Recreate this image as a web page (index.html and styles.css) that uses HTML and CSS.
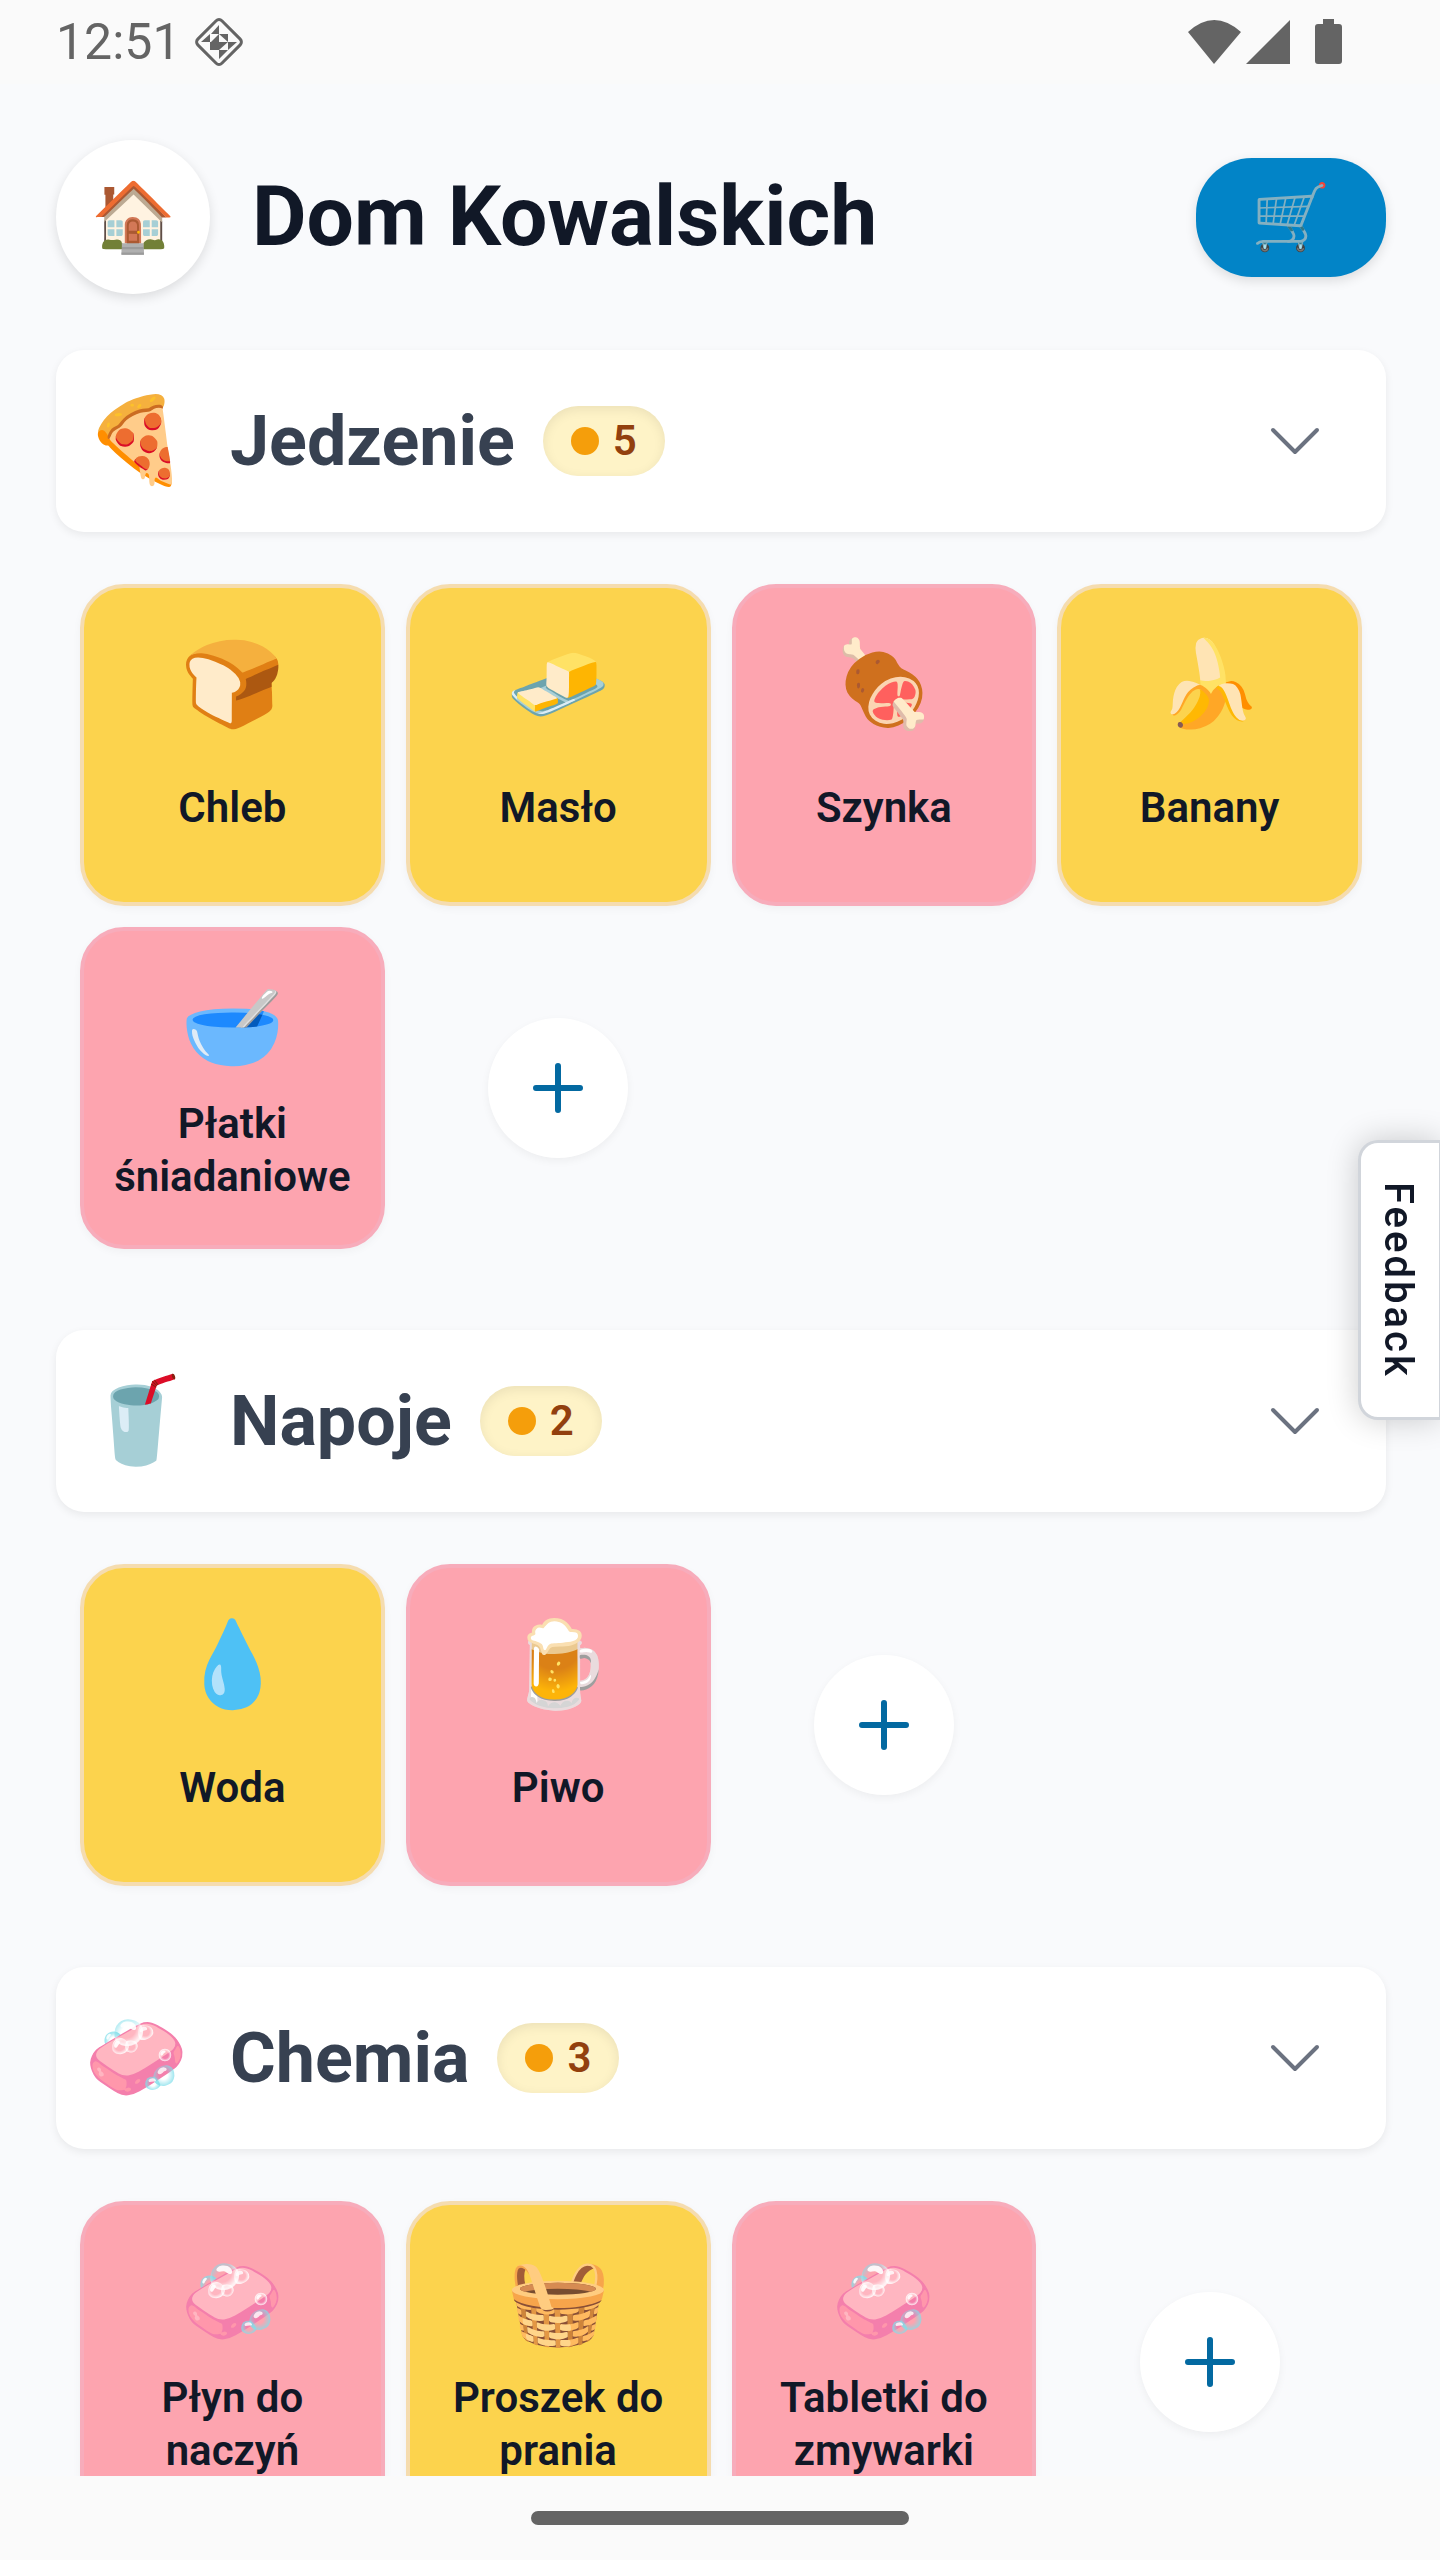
FILE: index.html
```
<!DOCTYPE html>
<html lang="pl">
<head>
    <meta charset="UTF-8">
    <meta name="viewport" content="width=device-width, initial-scale=1.0">
    <title>Dom Kowalskich</title>
    <link rel="stylesheet" href="styles.css">
</head>
<body>
    <div class="status-bar">
        <span class="clock">12:51</span>
        <svg class="status-app" viewBox="0 0 50 50" aria-hidden="true">
            <rect x="8" y="8" width="34" height="34" rx="4" transform="rotate(45 25 25)" fill="none" stroke="#646464" stroke-width="3"/>
            <path fill="#646464" d="M25 8v9h-8zM16 17v8H7zM25 17v8h-8zM25 17h9v8zM16 25h9v8zM25 25h9l-9 8zM34 25h9l-9 8zM16 25l9 8h-9zM25 33h9l-9 9z"/>
        </svg>
        <span class="status-spacer"></span>
        <svg class="status-icons" viewBox="0 0 156 48" aria-hidden="true">
            <path fill="#646464" d="M0 14Q26-10 53 14L26 46ZM58 46L102 2V46ZM135 1h11v5h5q3 0 3 3v34q0 3-3 3h-21q-3 0-3-3V9q0-3 3-3h5z"/>
        </svg>
    </div>

    <main>
        <header>
            <button class="home-btn" aria-label="Dom">🏠</button>
            <h1>Dom Kowalskich</h1>
            <button class="cart-btn" aria-label="Koszyk">🛒</button>
        </header>

        <section>
            <button class="category">
                <span class="emoji">🍕</span>
                <span class="category-name">Jedzenie</span>
                <span class="badge">5</span>
                <svg class="chevron" viewBox="0 0 52 30"><path d="M4 4l22 22L48 4"/></svg>
            </button>
            <div class="products">
                <button class="product low"><span class="emoji">🍞</span><span class="label">Chleb</span></button>
                <button class="product low"><span class="emoji">🧈</span><span class="label">Masło</span></button>
                <button class="product out"><span class="emoji">🍖</span><span class="label">Szynka</span></button>
                <button class="product low"><span class="emoji">🍌</span><span class="label">Banany</span></button>
                <button class="product out"><span class="emoji">🥣</span><span class="label">Płatki śniadaniowe</span></button>
                <button class="add-btn" aria-label="Dodaj"><svg viewBox="0 0 50 50"><path d="M25 3v44M3 25h44"/></svg></button>
            </div>
        </section>

        <section>
            <button class="category">
                <span class="emoji">🥤</span>
                <span class="category-name">Napoje</span>
                <span class="badge">2</span>
                <svg class="chevron" viewBox="0 0 52 30"><path d="M4 4l22 22L48 4"/></svg>
            </button>
            <div class="products">
                <button class="product low"><span class="emoji">💧</span><span class="label">Woda</span></button>
                <button class="product out"><span class="emoji">🍺</span><span class="label">Piwo</span></button>
                <button class="add-btn" aria-label="Dodaj"><svg viewBox="0 0 50 50"><path d="M25 3v44M3 25h44"/></svg></button>
            </div>
        </section>

        <section>
            <button class="category">
                <span class="emoji">🧼</span>
                <span class="category-name">Chemia</span>
                <span class="badge">3</span>
                <svg class="chevron" viewBox="0 0 52 30"><path d="M4 4l22 22L48 4"/></svg>
            </button>
            <div class="products">
                <button class="product out"><span class="emoji">🧼</span><span class="label">Płyn do naczyń</span></button>
                <button class="product low"><span class="emoji">🧺</span><span class="label">Proszek do prania</span></button>
                <button class="product out"><span class="emoji">🧼</span><span class="label">Tabletki do zmywarki</span></button>
                <button class="add-btn" aria-label="Dodaj"><svg viewBox="0 0 50 50"><path d="M25 3v44M3 25h44"/></svg></button>
            </div>
        </section>
    </main>

    <nav class="nav-bar"><span class="nav-handle"></span></nav>

    <button class="feedback">Feedback</button>
</body>
</html>
```
FILE: styles.css
```
* {
    box-sizing: border-box;
}
body {
    margin: 0;
    height: 100vh;
    display: flex;
    flex-direction: column;
    overflow: hidden;
    font-family: Roboto, sans-serif;
    background-color: #fafafa;
    color: #111827;
}
button {
    border: none;
    padding: 0;
    font-family: inherit;
    color: inherit;
    cursor: pointer;
}
.status-bar {
    flex: none;
    display: flex;
    align-items: center;
    height: 84px;
    padding: 0 96px 0 56px;
    color: #646464;
}
.clock {
    font-size: 50px;
    line-height: 50px;
}
.status-app {
    width: 50px;
    height: 50px;
    margin-left: 13px;
}
.status-spacer {
    flex: 1;
}
.status-icons {
    width: 156px;
    height: 48px;
}
main {
    flex: 1;
    min-height: 0;
    overflow: hidden;
    padding: 56px 54px 0 56px;
    background-color: #f9fafc;
}
header {
    display: flex;
    align-items: center;
    margin-bottom: 56px;
}
h1 {
    flex: 1;
    margin: 0 0 0 42px;
    font-size: 84px;
    font-weight: 700;
    line-height: 100px;
}
.home-btn {
    display: flex;
    align-items: center;
    justify-content: center;
    width: 154px;
    height: 154px;
    border-radius: 50%;
    background-color: white;
    box-shadow: 0 4px 12px rgba(0, 0, 0, 0.12);
    font-size: 68px;
}
.cart-btn {
    display: flex;
    align-items: center;
    justify-content: center;
    width: 190px;
    height: 119px;
    border-radius: 56px;
    background-color: #0284c7;
    box-shadow: 0 4px 12px rgba(0, 0, 0, 0.12);
    font-size: 64px;
}
.emoji {
    font-size: 84px;
    line-height: 98px;
    height: 98px;
}
section {
    margin-bottom: 81px;
}
.category {
    display: flex;
    align-items: center;
    width: 100%;
    height: 182px;
    padding: 0 65px 0 28px;
    border-radius: 28px;
    background-color: white;
    box-shadow: 0 3px 8px rgba(0, 0, 0, 0.07);
}
.category-name {
    margin-left: 41px;
    font-size: 70px;
    font-weight: 700;
    line-height: 80px;
    color: #374151;
}
.badge {
    display: flex;
    align-items: center;
    gap: 14px;
    height: 70px;
    margin-left: 28px;
    padding: 0 28px;
    border-radius: 35px;
    background-color: #fef3c7;
    box-shadow: inset 0 3px 12px rgba(0, 0, 0, 0.08);
    color: #92400e;
    font-size: 42px;
    font-weight: 600;
    line-height: 48px;
}
.badge::before {
    content: "";
    width: 28px;
    height: 28px;
    border-radius: 50%;
    background-color: #f59e0b;
}
.chevron {
    width: 52px;
    height: 30px;
    margin-left: auto;
    fill: none;
    stroke: #6b7280;
    stroke-width: 4;
    stroke-linecap: round;
    stroke-linejoin: round;
}
.products {
    display: grid;
    grid-template-columns: repeat(4, 1fr);
    grid-auto-rows: 322px;
    gap: 21px;
    margin-top: 52px;
    padding: 0 24px;
}
.product {
    display: flex;
    flex-direction: column;
    align-items: center;
    justify-content: flex-start;
    gap: 20px;
    padding: 48px 20px 0;
    border: 4px solid;
    border-radius: 44px;
    box-shadow: 0 3px 8px rgba(0, 0, 0, 0.04);
}
.low {
    background-color: #fcd34d;
    border-color: #f5dcaf;
}
.out {
    background-color: #fda4af;
    border-color: #f7acbb;
}
.label {
    display: flex;
    align-items: center;
    height: 106px;
    font-size: 42px;
    font-weight: 600;
    line-height: 53px;
}
.add-btn {
    place-self: center;
    display: flex;
    align-items: center;
    justify-content: center;
    width: 140px;
    height: 140px;
    border-radius: 50%;
    background-color: white;
    box-shadow: 0 3px 8px rgba(0, 0, 0, 0.05);
}
.add-btn svg {
    width: 50px;
    height: 50px;
    stroke: #0369a1;
    stroke-width: 6;
    stroke-linecap: round;
}
.nav-bar {
    flex: none;
    display: flex;
    justify-content: center;
    height: 84px;
    padding-top: 35px;
}
.nav-handle {
    width: 378px;
    height: 14px;
    border-radius: 7px;
    background-color: #646464;
}
/* tab stuck to the right edge of the screen */
.feedback {
    position: fixed;
    right: 0;
    top: 50%;
    transform: translateY(-50%);
    width: 82px;
    height: 280px;
    padding-right: 4px;
    border: 3px solid #d1d5db;
    border-right-width: 1px;
    border-radius: 20px 0 0 20px;
    background-color: white;
    box-shadow: 0 0 32px rgba(0, 0, 0, 0.2);
    writing-mode: vertical-rl;
    font-size: 40px;
    font-weight: 500;
    letter-spacing: 3px;
}
```
